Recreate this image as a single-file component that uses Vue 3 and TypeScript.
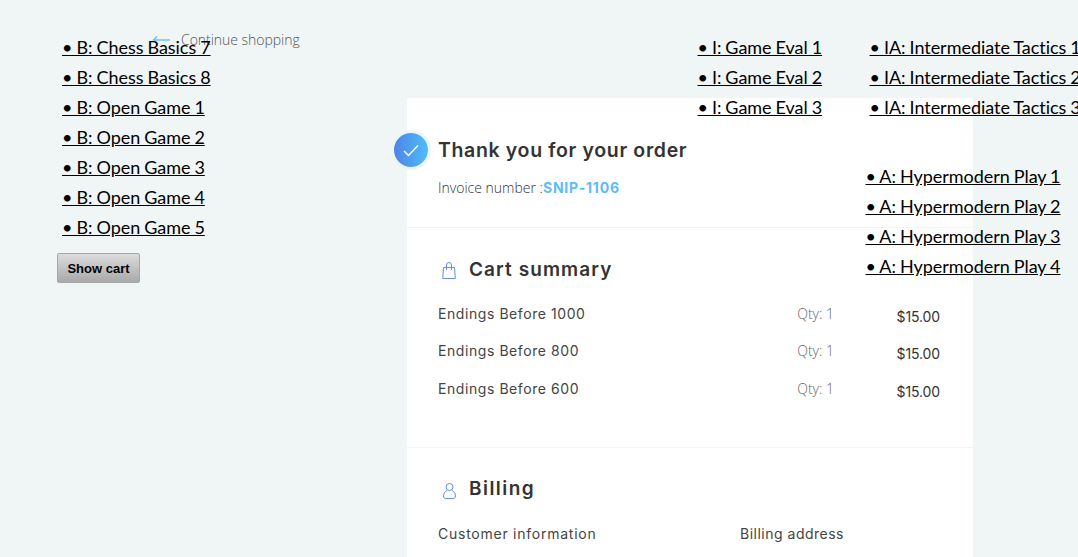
<script setup lang="ts">
const col1: string[] = ['B: Chess Basics 7','B: Chess Basics 8','B: Open Game 1','B: Open Game 2','B: Open Game 3','B: Open Game 4','B: Open Game 5']
const col2: string[] = ['I: Game Eval 1','I: Game Eval 2','I: Game Eval 3']
const col3: string[] = ['IA: Intermediate Tactics 1','IA: Intermediate Tactics 2','IA: Intermediate Tactics 3']
const col4: string[] = ['A: Hypermodern Play 1','A: Hypermodern Play 2','A: Hypermodern Play 3','A: Hypermodern Play 4']
const items: { name: string; top: string }[] = [
  { name: 'Endings Before 1000', top: 'a' },
  { name: 'Endings Before 800', top: 'b' },
  { name: 'Endings Before 600', top: 'c' }
]
</script>

<template>
  <div class="page">
    <div class="back">
      <svg class="arrow" width="20" height="10" viewBox="0 0 20 10" fill="none" stroke="#6cc4fc" stroke-width="1.5">
        <path d="M18 5H1.500M5 1.500L1.500 5 5 8.500" />
      </svg>
      <span>Continue shopping</span>
    </div>

    <main class="card">
      <section class="head">
        <div class="badge">
          <svg width="16" height="13" viewBox="0 0 16 13" fill="none" stroke="#fff" stroke-width="1.4">
            <path d="M1 7l4.500 4.500L15 1.500" />
          </svg>
        </div>
        <h1>Thank you for your order</h1>
        <p class="inv">Invoice number :<b>SNIP-1106</b></p>
      </section>

      <section class="cart">
        <h2>
          <svg width="16" height="19" viewBox="0 0 16 19" fill="none" stroke="#5f8ff0" stroke-width="1">
            <path d="M2.500 6.500h11l.8 11H1.700zM5.500 9V4a2.500 2.500 0 0 1 5 0v5" />
          </svg>
          Cart summary
        </h2>
        <div v-for="it in items" :key="it.top" class="row" :class="it.top">
          <span class="name">{{ it.name }}</span>
          <span class="qty">Qty: 1</span>
          <span class="price">$15.00</span>
        </div>
      </section>

      <section class="billing">
        <h2>
          <svg width="16" height="19" viewBox="0 0 16 19" fill="none" stroke="#5f8ff0" stroke-width="1">
            <g transform="translate(0.500 1)">
              <circle cx="8" cy="6" r="3.500" />
              <path d="M5.500 9.500C3.500 10.500 2 12.500 2 15c0 1.500 1 2.500 2.500 2.500h7c1.500 0 2.500-1 2.500-2.500 0-2.500-1.500-4.500-3.500-5.500" />
            </g>
          </svg>
          <span class="billing-title">Billing</span>
        </h2>
        <div class="cols">
          <span class="info">Customer information</span>
          <span class="addr">Billing address</span>
        </div>
      </section>
    </main>

    <div class="links l1">
      <a v-for="t in col1" :key="t" href="#">• {{ t }}</a>
      <button type="button">Show cart</button>
    </div>
    <div class="links l2"><a v-for="t in col2" :key="t" href="#">• {{ t }}</a></div>
    <div class="links l3"><a v-for="t in col3" :key="t" href="#">• {{ t }}</a></div>
    <div class="links l4"><a v-for="t in col4" :key="t" href="#">• {{ t }}</a></div>
  </div>
</template>

<style>
html, body { margin: 0; background: #f0f5f5; overflow: hidden; }
</style>

<style scoped>
.page {
  position: relative;
  height: 557px;
  overflow: hidden;
  background: #f0f5f5;
  font-family: Inter, "Noto Sans", sans-serif;
  color: #333;
}
.back {
  position: absolute;
  left: 152px;
  top: 30px;
  display: flex;
  align-items: center;
  gap: 9px;
  font: 300 14px/20px "Open Sans", sans-serif;
  letter-spacing: -0.03px;
  color: #555;
}
.arrow { flex: none; }
.card {
  width: 566px;
  height: 459px;
  margin-left: 407px;
  position: absolute;
  top: 98px;
  background: #fff;
  overflow: visible;
}
section { padding: 0 31px; border-bottom: 1px solid #f2f5f5; box-sizing: border-box; position: relative; }
.head { height: 130px; padding-top: 39px; }
h1 {
  margin: 0;
  font: 600 19.500px/26px Inter, sans-serif;
  letter-spacing: 0.65px;
  color: #333;
}
.inv {
  margin: 13px 0 0;
  font: 300 14px/24px "Open Sans", sans-serif;
  color: #333;
}
.inv b { font: 700 14px/24px Inter, sans-serif; color: #5cbcfa; letter-spacing: 0.8px; }
.badge {
  position: absolute;
  left: -13px;
  top: 35px;
  width: 34px;
  height: 34px;
  border-radius: 50%;
  background: linear-gradient(90deg, #4f83e6, #50bdfa);
  box-shadow: 0 0 0 3px #eef5f8;
  display: flex;
  align-items: center;
  justify-content: center;
}
.cart { height: 220px; padding-top: 29px; }
h2 {
  margin: 0 0 0 3px;
  display: flex;
  align-items: center;
  gap: 12px;
  font: 600 19px/26px Inter, sans-serif;
  letter-spacing: 1.08px;
  color: #333;
}
.billing-title { letter-spacing: 1.45px; }
.row {
  position: absolute;
  left: 31px;
  right: 33px;
  display: flex;
  align-items: flex-start;
  font: 400 14px/20px Inter, sans-serif;
}
.a { top: 76px; }
.b { top: 113px; }
.c { top: 151px; }
.name { flex: 1; color: #444; letter-spacing: 0.57px; }
.qty { font: 300 14px/20px "Open Sans", sans-serif; color: #666; }
.price { width: 106px; text-align: right; padding-top: 3px; color: #333; letter-spacing: -0.12px; }
.billing { border-bottom: 0; padding-top: 28px; }
.cols {
  display: grid;
  grid-template-columns: 302px 1fr;
  margin-top: 22px;
  font: 400 14px/20px Inter, sans-serif;
  color: #444;
}
.info { letter-spacing: 0.75px; }
.addr { letter-spacing: 0.5px; }
.links {
  position: absolute;
  display: flex;
  flex-direction: column;
  align-items: flex-start;
  font: 400 18px/30px Lato, sans-serif;
  letter-spacing: -0.03px;
  word-spacing: -0.600px;
}
.links a { color: #000; text-decoration: underline; white-space: nowrap; }
.l1 { left: 62px; top: 31.500px; }
.l2 { left: 697.500px; top: 31.500px; }
.l3 { left: 869.500px; top: 31.500px; }
.l4 { left: 865.500px; top: 161px; }
button {
  margin: 11.500px 0 0 -5px;
  width: 83px;
  height: 30px;
  padding: 0;
  border: 1px solid #a6a6a6;
  border-radius: 2px;
  background: linear-gradient(#dcdcdc, #a9a9a9);
  font: 700 13px "Liberation Sans", sans-serif;
  color: #000;
}
</style>
